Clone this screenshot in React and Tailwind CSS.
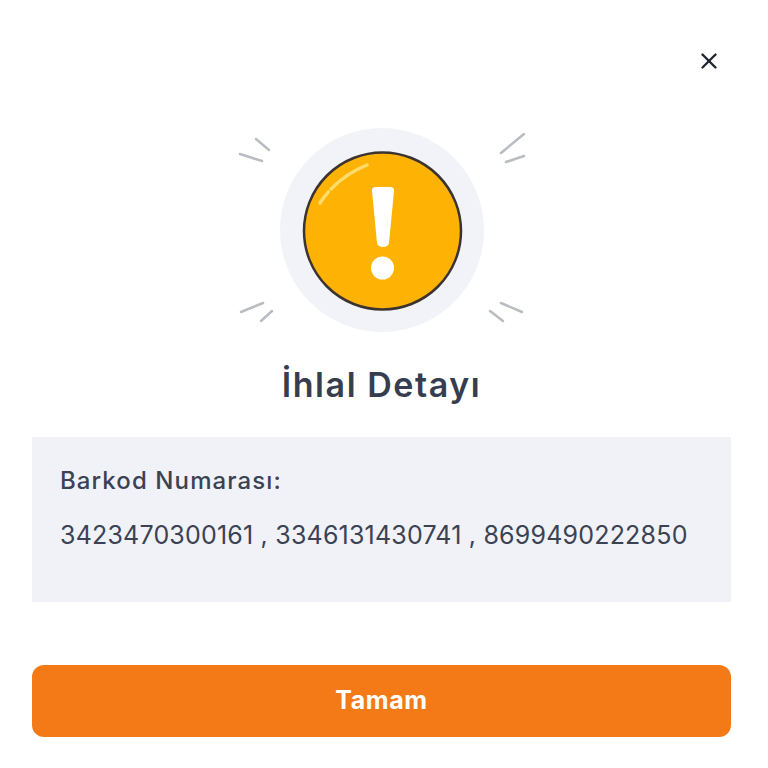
import { X } from 'lucide-react'

function WarningIcon() {
  return (
    <svg width="300" height="210" viewBox="0 0 300 210" fill="none" className="block">
      <circle cx="150" cy="105" r="102" fill="#f1f3f9" />
      <circle cx="150.500" cy="106" r="78.500" fill="#fdb204" stroke="#3a3332" strokeWidth="2.500" />
      <path d="M88 78 C98 62 115 48 135 40" stroke="#ffdc6a" strokeWidth="3.500" strokeLinecap="round" strokeDasharray="14 4 60" />
      <path d="M140 66 Q139.500 62 144 62 H158 Q162.500 62 162 66 L157 118 Q156 122 151 122 Q146 122 145 118 Z" fill="#fff" />
      <circle cx="150.500" cy="143" r="11.500" fill="#fff" />
      <g stroke="#b9bcc2" strokeWidth="2.500" strokeLinecap="round">
        <path d="M24 14 L37 25" />
        <path d="M8 29 L30 36" />
        <path d="M269 28 L292 9" />
        <path d="M274 37 L292 31" />
        <path d="M9 187 L31 178" />
        <path d="M29 196 L40 186" />
        <path d="M269 178 L290 187" />
        <path d="M258 186 L271 196" />
      </g>
    </svg>
  )
}

export default function App() {
  return (
    <div className="h-[768px] w-[768px] overflow-hidden bg-white pl-8 pr-[37px] pt-[43px] font-['Inter',sans-serif]">
      <div className="flex h-9 justify-end pr-[4px]">
        <button aria-label="Kapat" className="flex h-9 w-9 items-center justify-center text-[#1f2430]">
          <X className="h-[26px] w-[26px]" strokeWidth={2.2} />
        </button>
      </div>
      <div className="mt-[46px] flex justify-center">
        <WarningIcon />
      </div>
      <h2 className="mt-[28px] text-center text-[34px] font-semibold leading-[44px] tracking-[1.55px] text-[#363d4f]">
        İhlal Detayı
      </h2>
      <div className="mt-[30px] h-[165px] bg-[#f0f2f8] px-[28px] pt-[29px] text-[#3b4252]">
        <p className="whitespace-nowrap text-[24px] font-medium leading-[30px] tracking-[1.1px]">Barkod Numarası:</p>
        <p className="mt-[24px] whitespace-nowrap text-[25px] leading-[30px] tracking-[0.2px]">
          3423470300161 , 3346131430741 , 8699490222850
        </p>
      </div>
      <button className="mt-[63px] flex h-[72px] w-full items-center justify-center rounded-[12px] bg-[#f47a18] text-[25px] font-bold tracking-[0.6px] text-white">
        Tamam
      </button>
    </div>
  )
}
